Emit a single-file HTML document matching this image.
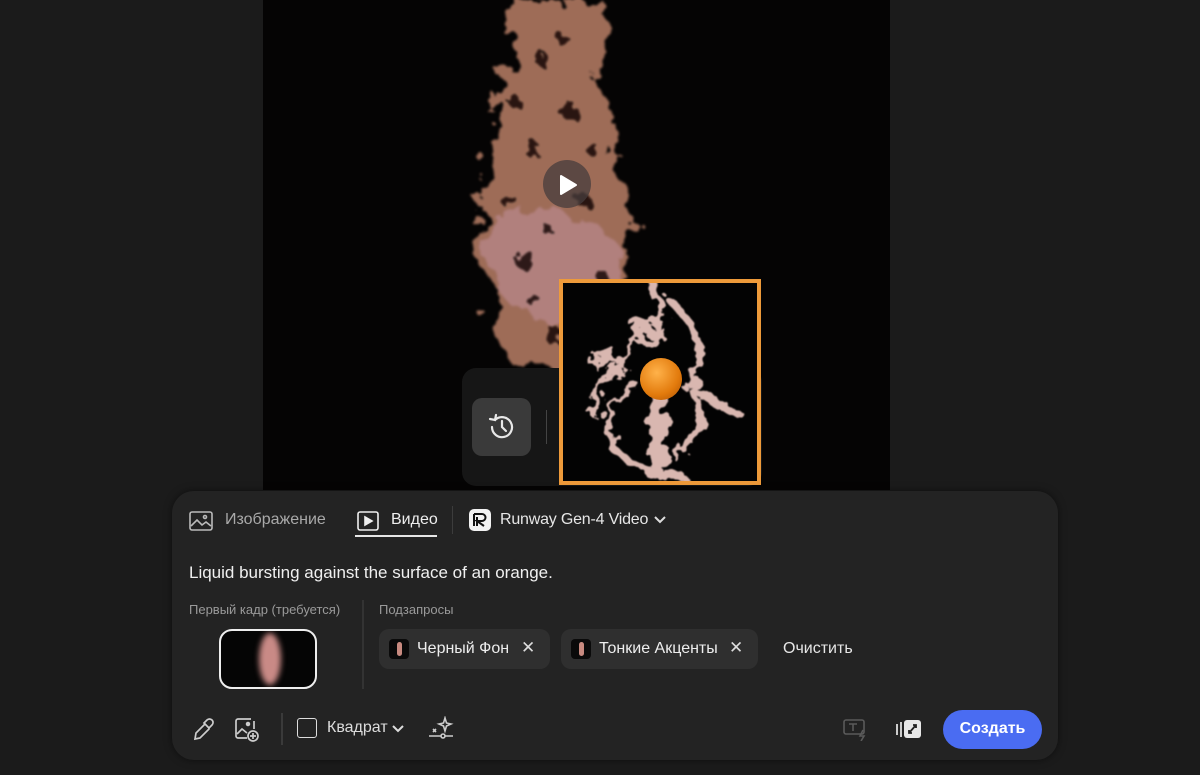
<!DOCTYPE html>
<html><head><meta charset="utf-8"><style>
*{box-sizing:border-box;margin:0;padding:0}
body{width:1200px;height:775px;background:#1b1b1b;font-family:"Liberation Sans",sans-serif;color:#e6e6e6;position:relative;overflow:hidden}
.abs{position:absolute}
.video{left:263px;top:0;width:627px;height:490px;background:#050404;overflow:hidden}
.blob{position:absolute;border-radius:50%;filter:blur(6px)}
.panel{left:172px;top:491px;width:886px;height:269px;background:#232323;border-radius:22px;box-shadow:0 0 8px rgba(0,0,0,.5)}
.t{position:absolute;white-space:nowrap}
.chip{position:absolute;top:629px;height:40px;background:#2f2f2f;border-radius:10px}
.mini{position:absolute;left:10px;top:10px;width:20px;height:20px;border-radius:4px;background:#0a0a0a;overflow:hidden}
.mini i{position:absolute;left:8px;top:3px;width:5px;height:14px;background:#c88a80;border-radius:3px}
svg{position:absolute}
</style></head><body>
<div class="abs video">
  <svg style="left:0;top:0" width="627" height="490" viewBox="0 0 627 490">
    <defs><filter id="sp" x="-30%" y="-10%" width="160%" height="120%"><feTurbulence type="fractalNoise" baseFrequency="0.05" numOctaves="3" seed="4"/><feDisplacementMap in="SourceGraphic" scale="40"/><feGaussianBlur stdDeviation="1.2"/></filter>
    <filter id="sp2" x="-30%" y="-10%" width="160%" height="120%"><feTurbulence type="fractalNoise" baseFrequency="0.09" numOctaves="2" seed="9"/><feDisplacementMap in="SourceGraphic" scale="20"/><feGaussianBlur stdDeviation="1"/></filter></defs>
    <g filter="url(#sp)" opacity="0.85">
      <path d="M255 0 L340 0 Q355 40 330 80 Q365 130 350 170 Q385 210 360 250 Q380 290 330 300 Q355 340 310 370 L255 370 Q215 330 235 290 Q195 250 220 215 Q215 170 235 140 Q230 90 252 60 Q240 30 255 0Z" fill="#b97f66"/>
      <path d="M225 220 Q280 195 340 230 Q380 260 335 300 Q300 335 255 312 Q210 270 225 220Z" fill="#d09693"/>
    </g>
    <g filter="url(#sp2)" fill="#070505" opacity="0.8">
      <circle cx="280" cy="60" r="7"/><circle cx="305" cy="110" r="9"/><circle cx="270" cy="150" r="8"/><circle cx="320" cy="200" r="7"/><circle cx="262" cy="260" r="10"/><circle cx="290" cy="335" r="9"/><circle cx="300" cy="40" r="6"/><circle cx="250" cy="100" r="6"/><circle cx="330" cy="150" r="6"/><circle cx="245" cy="200" r="7"/><circle cx="340" cy="280" r="8"/><circle cx="270" cy="300" r="6"/><circle cx="285" cy="230" r="5"/>
    </g>
  </svg>
  <div style="position:absolute;left:280px;top:160px;width:48px;height:48px;border-radius:50%;background:rgba(70,60,60,.75)"></div>
  <svg style="left:293px;top:173px" width="24" height="24"><path d="M5 3 L20 12 L5 21 Z" fill="#fff" stroke="#fff" stroke-width="2" stroke-linejoin="round"/></svg>
</div>
<div class="abs" style="left:462px;top:368px;width:300px;height:118px;background:#161616;border-radius:14px"></div>
<div class="abs" style="left:472px;top:398px;width:59px;height:58px;background:#3a3a3a;border-radius:10px"></div>
<svg style="left:486px;top:411px" width="32" height="32" viewBox="0 0 32 32" fill="none" stroke="#e8e8e8" stroke-width="2.2" stroke-linecap="round"><path d="M6 16 A10 10 0 1 0 9 9"/><path d="M4 8 L9 9 L10 4"/><path d="M16 10 V16 L20 20"/></svg>
<div class="abs" style="left:546px;top:410px;width:1px;height:34px;background:#444"></div>
<div class="abs" style="left:559px;top:279px;width:202px;height:206px;border:4px solid #ee9a3a;background:#030303;overflow:hidden">
  <svg style="left:0;top:0" width="194" height="198" viewBox="0 0 194 198">
    <defs><filter id="sp3" x="-20%" y="-20%" width="140%" height="140%"><feTurbulence type="fractalNoise" baseFrequency="0.06" numOctaves="3" seed="2"/><feDisplacementMap in="SourceGraphic" scale="30"/><feGaussianBlur stdDeviation="0.8"/></filter></defs>
    <g filter="url(#sp3)" fill="none" stroke="#d9b7b0" stroke-width="8" stroke-linecap="round">
      <path d="M90 0 Q110 40 70 60 Q40 90 30 130"/>
      <path d="M110 20 Q150 60 130 110 Q150 140 110 170"/>
      <path d="M70 100 Q40 120 45 160 Q70 190 120 195"/>
      <path d="M95 110 L95 180" stroke-width="16"/>
      <path d="M130 110 L175 130"/>
      <path d="M55 70 L30 80"/>
      <path d="M70 40 L100 50"/>
    </g>
  </svg>
  <div style="position:absolute;left:77px;top:75px;width:42px;height:42px;border-radius:50%;background:radial-gradient(circle at 40% 35%,#ffb24a,#e27a0c 60%,#a84f05)"></div>
</div>
<div class="abs panel"></div>
<svg style="left:189px;top:511px" width="24" height="20" viewBox="0 0 24 20" fill="none" stroke="#bbb" stroke-width="1.6"><rect x="1" y="1" width="22" height="18" rx="2"/><path d="M2 15 L8 9 L13 14 L17 11 L22 15"/><circle cx="16" cy="6" r="1.5"/></svg>
<div class="t" style="left:225px;top:511px;font-size:16px;color:#a9a9a9">Изображение</div>
<svg style="left:357px;top:511px" width="22" height="20" viewBox="0 0 22 20" fill="none" stroke="#eee" stroke-width="1.6"><rect x="1" y="1" width="20" height="18" rx="2"/><path d="M8 6 L15 10 L8 14Z" fill="#eee"/></svg>
<div class="t" style="left:391px;top:511px;font-size:16px;color:#eee">Видео</div>
<div class="abs" style="left:355px;top:535px;width:82px;height:2px;background:#e6e6e6"></div>
<div class="abs" style="left:452px;top:506px;width:1px;height:28px;background:#3c3c3c"></div>
<div class="abs" style="left:469px;top:509px;width:22px;height:22px;background:#f2f2f2;border-radius:5px"></div>
<svg style="left:469px;top:509px" width="22" height="22" viewBox="0 0 22 22" fill="none" stroke="#111" stroke-width="2"><path d="M5 5 H13 A3.5 3.5 0 0 1 13 12 H8 L15 17 M8 8 V17 M5 5 V17"/></svg>
<div class="t" style="left:500px;top:511px;font-size:16px;color:#e6e6e6;letter-spacing:-0.2px">Runway Gen-4 Video</div>
<svg style="left:654px;top:515px" width="12" height="10"><path d="M1 2 L6 7 L11 2" fill="none" stroke="#ddd" stroke-width="2"/></svg>
<div class="t" style="left:189px;top:563px;font-size:17px;color:#f0f0f0">Liquid bursting against the surface of an orange.</div>
<div class="t" style="left:189px;top:602px;font-size:13px;color:#9a9a9a">Первый кадр (требуется)</div>
<div class="t" style="left:379px;top:602px;font-size:13px;color:#9a9a9a">Подзапросы</div>
<div class="abs" style="left:362px;top:600px;width:2px;height:89px;background:#333"></div>
<div class="abs" style="left:219px;top:629px;width:98px;height:60px;border:2px solid #eee;border-radius:13px;background:#050505;overflow:hidden">
  <div class="blob" style="left:38px;top:2px;width:22px;height:52px;background:#c98a86;filter:blur(3px)"></div>
</div>
<div class="chip" style="left:379px;width:171px"><div class="mini"><i></i></div><div class="t" style="left:38px;top:11px;font-size:16px;color:#eee">Черный Фон</div><div class="t" style="left:142px;top:9px;font-size:17px;color:#ddd">✕</div></div>
<div class="chip" style="left:561px;width:197px"><div class="mini"><i></i></div><div class="t" style="left:38px;top:11px;font-size:16px;color:#eee">Тонкие Акценты</div><div class="t" style="left:168px;top:9px;font-size:17px;color:#ddd">✕</div></div>
<div class="t" style="left:783px;top:640px;font-size:16px;color:#e6e6e6">Очистить</div>
<svg style="left:192px;top:716px" width="24" height="26" viewBox="0 0 24 26" fill="none" stroke="#ccc" stroke-width="1.7" stroke-linecap="round"><path d="M15 4 A3 3 0 0 1 20 9 L17 12 L12 7 Z"/><path d="M13 8 L4 17 L3 23 L8 22 L17 13"/></svg>
<svg style="left:234px;top:717px" width="26" height="26" viewBox="0 0 26 26" fill="none" stroke="#ccc" stroke-width="1.7"><path d="M17 2 H4 A2 2 0 0 0 2 4 V19 A2 2 0 0 0 4 21 H13 M20 12 V4"/><path d="M3 17 L8 12 L13 16"/><circle cx="14" cy="7" r="1.4" fill="#ccc"/><circle cx="19" cy="19" r="5"/><path d="M19 16 V22 M16 19 H22"/></svg>
<div class="abs" style="left:281px;top:713px;width:2px;height:32px;background:#3a3a3a"></div>
<div class="abs" style="left:297px;top:718px;width:20px;height:20px;border:1.8px solid #ddd;border-radius:3px"></div>
<div class="t" style="left:327px;top:719px;font-size:16px;color:#ddd">Квадрат</div>
<svg style="left:392px;top:724px" width="12" height="10"><path d="M1 2 L6 7 L11 2" fill="none" stroke="#ddd" stroke-width="2"/></svg>
<svg style="left:428px;top:716px" width="26" height="26" viewBox="0 0 26 26" fill="none" stroke="#ccc" stroke-width="1.6"><path d="M17 2 L18.5 7 L23 8 L18.5 10 L17 15 L15.5 10 L11 8 L15.5 7 Z"/><path d="M5 13 L8 16 M8 13 L5 16"/><path d="M1 20 H13 M17 20 H25"/><circle cx="15" cy="20" r="2"/></svg>
<svg style="left:843px;top:719px" width="26" height="22" viewBox="0 0 26 22" fill="none" stroke="#5a5a5a" stroke-width="1.6"><rect x="1" y="1" width="20" height="14" rx="2"/><path d="M6 5 H14 M10 5 V12"/><path d="M20 11 L17 17 H21 L18 22"/></svg>
<svg style="left:896px;top:719px" width="26" height="20" viewBox="0 0 26 20"><rect x="0" y="5" width="2" height="11" fill="#ccc"/><rect x="4" y="3" width="2" height="15" fill="#ccc"/><rect x="8" y="1" width="17" height="18" rx="3" fill="#e8e8e8"/><path d="M13 14 L20 6 M17 6 H20 V9 M13 11 V14 H16" stroke="#222" stroke-width="1.8" fill="none"/></svg>
<div class="abs" style="left:943px;top:710px;width:99px;height:39px;background:#4a6cf2;border-radius:20px"></div>
<div class="t" style="left:943px;top:720px;width:99px;text-align:center;font-size:16px;font-weight:bold;color:#fff">Создать</div>
</body></html>
